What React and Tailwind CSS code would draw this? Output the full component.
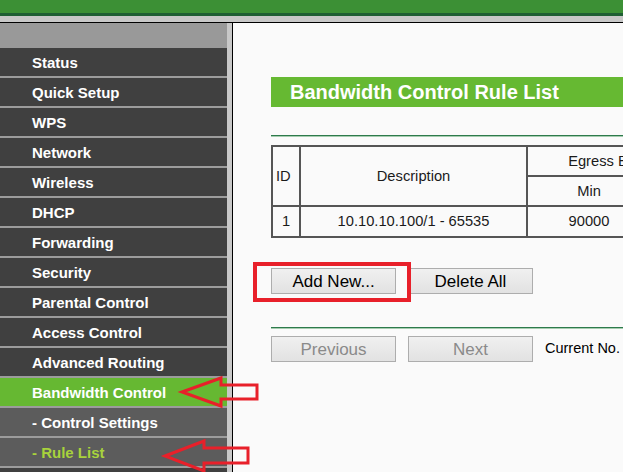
import React from 'react';

const menu = [
  { label: 'Status' },
  { label: 'Quick Setup' },
  { label: 'WPS' },
  { label: 'Network' },
  { label: 'Wireless' },
  { label: 'DHCP' },
  { label: 'Forwarding' },
  { label: 'Security' },
  { label: 'Parental Control' },
  { label: 'Access Control' },
  { label: 'Advanced Routing' },
  { label: 'Bandwidth Control', active: true },
  { label: '- Control Settings', sub: true },
  { label: '- Rule List', sub: true, current: true },
  { label: 'IP & MAC Binding' },
];

function MenuItem({ item }) {
  let bg = 'bg-[#404040]';
  if (item.active) bg = 'bg-[#66b832]';
  if (item.sub) bg = 'bg-[#5c5c5c]';
  return (
    <div className={`h-[30px] border-b-2 border-[#9c9c9c] flex items-center pl-[32px] pt-[2px] ${bg}`}>
      <span className={`text-[15px] font-bold whitespace-nowrap ${item.current ? 'text-[#a8d23c]' : 'text-white'}`}>
        {item.label}
      </span>
    </div>
  );
}

function Btn({ children, disabled }) {
  return (
    <button
      type="button"
      className={`w-[125px] h-[26px] border border-[#adadad] bg-gradient-to-b from-[#f0f0f0] to-[#e2e2e2] text-[17px] leading-none ${
        disabled ? 'text-[#8a8a8a]' : 'text-black'
      }`}
    >
      {children}
    </button>
  );
}

function GreenLine() {
  return (
    <div className="w-full">
      <div className="h-px bg-[#2e7a4c]" />
      <div className="h-px bg-[#a6cdb0]" />
    </div>
  );
}

export default function App() {
  const cell = 'border-2 border-[#555555] text-center text-[14.7px] text-[#1a1a1a] font-normal whitespace-nowrap';
  return (
    <div className="relative w-[623px] h-[472px] overflow-hidden bg-[#fafafa] font-['Liberation_Sans',Arial,sans-serif]">
      {/* header bar */}
      <div className="h-[13px] bg-[#3c9035]" />
      <div className="h-[3px] bg-[#1f5f34]" />
      <div className="h-[6px] bg-[#c8c8c8]" />
      <div className="h-px bg-black" />

      <div className="flex h-[449px]">
        {/* sidebar */}
        <div className="w-[227px] bg-[#404040] overflow-hidden">
          <div className="h-[25px] bg-[#999999]" />
          {menu.map((m) => (
            <MenuItem key={m.label} item={m} />
          ))}
        </div>
        <div className="w-[5px] bg-[#c8c8c8]" />
        <div className="w-px bg-black" />

        {/* content */}
        <div className="flex-1 overflow-hidden pl-[38px] pt-[54px]">
          <div className="w-[600px]">
            <div className="h-[30px] bg-[#66b932] flex items-center pl-[19px]">
              <span className="text-white font-bold text-[20px] whitespace-nowrap">Bandwidth Control Rule List</span>
            </div>

            <div className="mt-[28px]">
              <GreenLine />
            </div>

            <table className="mt-[8px] table-fixed border-collapse w-[751px]">
              <colgroup>
                <col className="w-[28px]" />
                <col className="w-[227px]" />
                <col className="w-[124px]" />
                <col className="w-[124px]" />
                <col className="w-[124px]" />
                <col className="w-[124px]" />
              </colgroup>
              <thead>
                <tr className="h-[30px]">
                  <th rowSpan={2} className={`${cell} text-left pl-[3px]`}>ID</th>
                  <th rowSpan={2} className={cell}>Description</th>
                  <th colSpan={2} className={cell}>Egress Bandwidth (Kbps)</th>
                  <th colSpan={2} className={cell}>Ingress Bandwidth (Kbps)</th>
                </tr>
                <tr className="h-[30px]">
                  <th className={cell}>Min</th>
                  <th className={cell}>Max</th>
                  <th className={cell}>Min</th>
                  <th className={cell}>Max</th>
                </tr>
              </thead>
              <tbody>
                <tr className="h-[31px]">
                  <td className={cell}>1</td>
                  <td className={cell}>10.10.10.100/1 - 65535</td>
                  <td className={cell}>90000</td>
                  <td className={cell}>100000</td>
                  <td className={cell}>90000</td>
                  <td className={cell}>100000</td>
                </tr>
              </tbody>
            </table>

            <div className="mt-[30px] flex gap-[12px]">
              <Btn>Add New...</Btn>
              <Btn>Delete All</Btn>
            </div>

            <div className="mt-[33px]">
              <GreenLine />
            </div>

            <div className="mt-[7px] flex items-center gap-[12px]">
              <Btn disabled>Previous</Btn>
              <Btn disabled>Next</Btn>
              <span className="text-[14.5px] text-black whitespace-nowrap">Current No. 1 Page</span>
            </div>
          </div>
        </div>
      </div>

      {/* red annotations */}
      <div className="absolute left-[253px] top-[262px] w-[158px] h-[40px] border-4 border-[#e8202a] pointer-events-none" />
      <svg className="absolute inset-0 pointer-events-none" width="623" height="472" viewBox="0 0 623 472">
        <polygon
          points="182,392 221,378 221,385 257,385 257,399 221,399 221,406"
          fill="none"
          stroke="#e8202a"
          strokeWidth="3"
          strokeLinejoin="miter"
        />
        <polygon
          points="165,456 204,441 204,448 248,448 248,463 204,463 204,471"
          fill="none"
          stroke="#e8202a"
          strokeWidth="3"
          strokeLinejoin="miter"
        />
      </svg>
    </div>
  );
}
